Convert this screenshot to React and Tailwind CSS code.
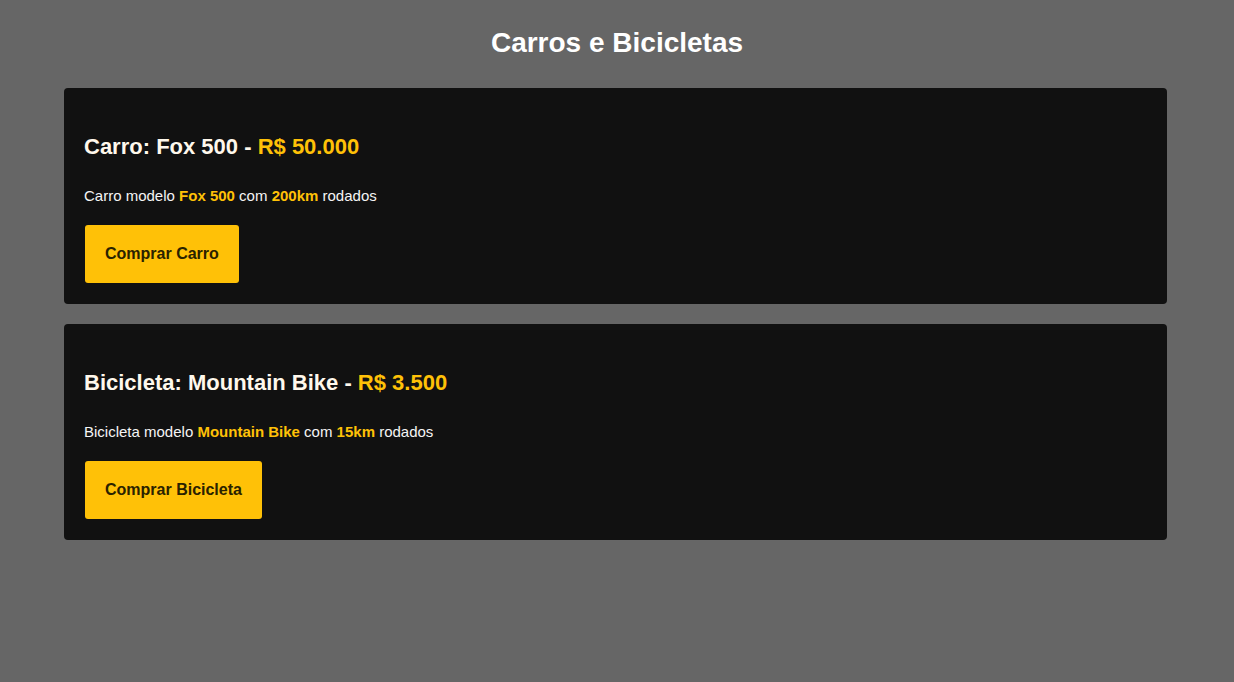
import React from "react";

const produtos = [
  {
    tipo: "Carro",
    modelo: "Fox 500",
    preco: "R$ 50.000",
    km: "200km",
    botao: "Comprar Carro",
  },
  {
    tipo: "Bicicleta",
    modelo: "Mountain Bike",
    preco: "R$ 3.500",
    km: "15km",
    botao: "Comprar Bicicleta",
  },
];

const ProdutoCard = ({ produto }) => (
  <div className="bg-[#111111] rounded-[4px] px-[20px] pt-[20px] pb-[21px]">
    <h2 className="mt-[22px] text-[22px] leading-[33px] font-bold text-[#fff8ec]">
      {produto.tipo}: {produto.modelo} - <span className="text-[#ffc107]">{produto.preco}</span>
    </h2>
    <p className="mt-[21px] text-[15px] leading-[24px] text-[#f5f5f5]">
      {produto.tipo} modelo <strong className="text-[#ffc107]">{produto.modelo}</strong> com{" "}
      <strong className="text-[#ffc107]">{produto.km}</strong> rodados
    </p>
    <button
      className="mt-[17px] ml-px h-[58px] px-[20px] rounded-[3px] bg-[#ffc107] text-[#2a2200] text-[16px] font-bold"
      style={{ fontFamily: "'Liberation Sans', Arial, sans-serif" }}
    >
      {produto.botao}
    </button>
  </div>
);

export default function App() {
  return (
    <div
      className="min-h-[682px] bg-[#666666] pt-[23px]"
      style={{ fontFamily: "'Liberation Sans', Arial, sans-serif" }}
    >
      <h1 className="text-center text-[28px] leading-[40px] font-bold text-white">
        Carros e Bicicletas
      </h1>
      <div className="mt-[25px] ml-[64px] w-[1103px] flex flex-col gap-[20px]">
        {produtos.map((p, i) => (
          <ProdutoCard key={i} produto={p} />
        ))}
      </div>
    </div>
  );
}
